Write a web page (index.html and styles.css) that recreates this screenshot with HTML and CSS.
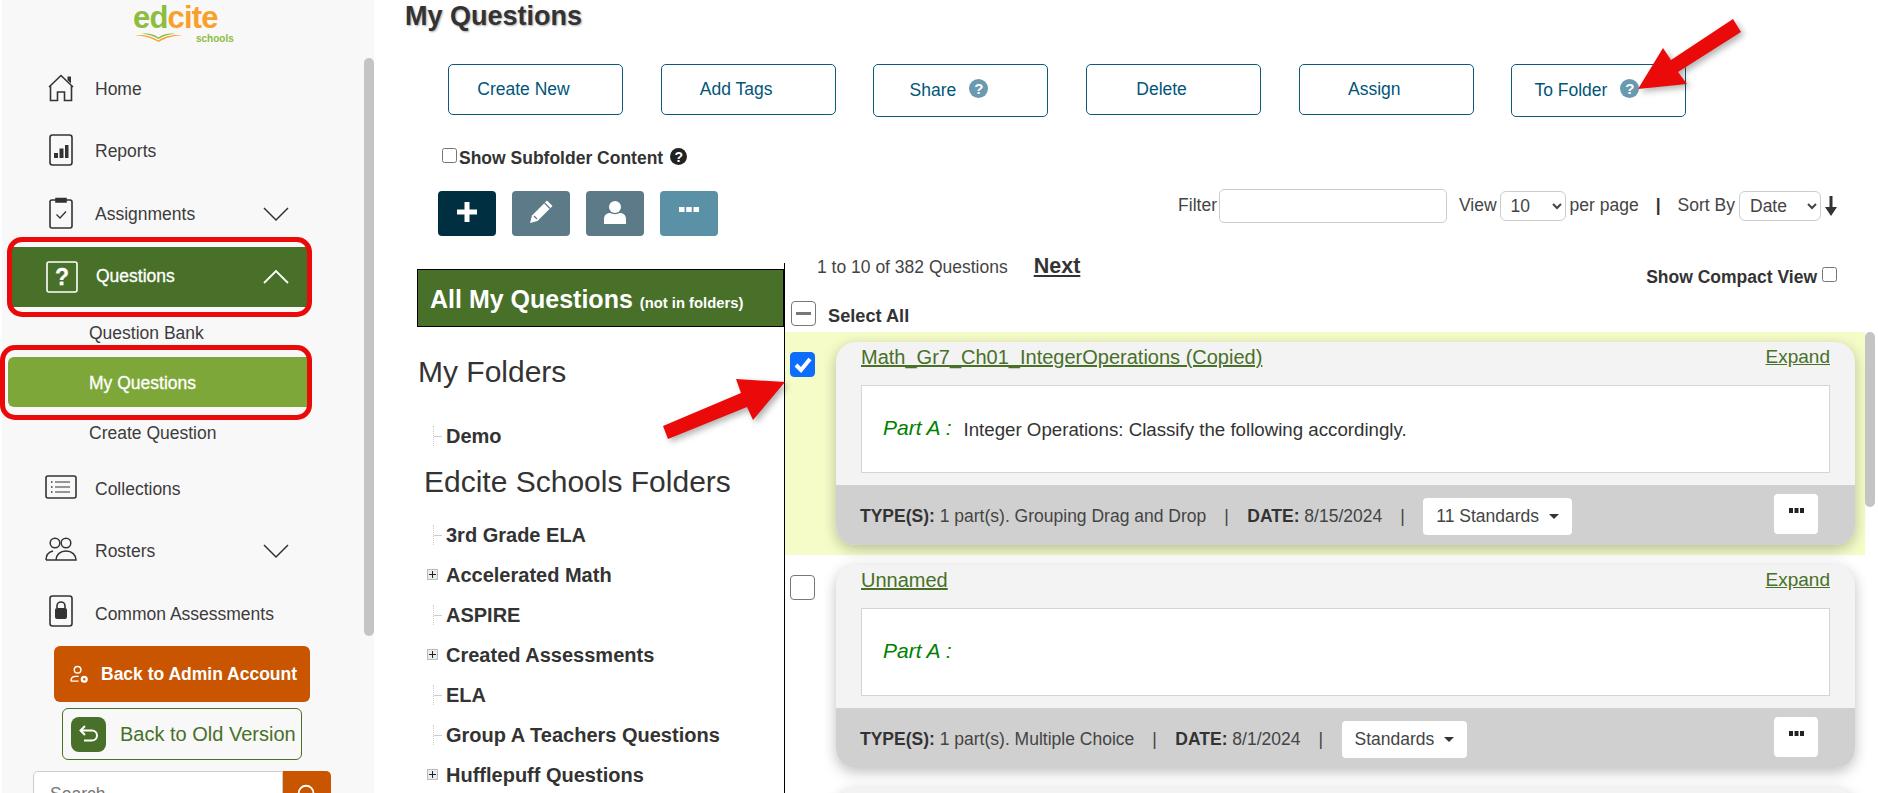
FILE: index.html
```html
<!DOCTYPE html>
<html lang="en">
<head>
<meta charset="utf-8">
<title>My Questions</title>
<link rel="stylesheet" href="styles.css">
</head>
<body>
<aside class="side">
  <div class="logo">
    <div class="logo-word"><span class="l-g">ed</span><span class="l-o">cite</span></div>
    <div class="logo-sub">
      <svg class="logo-book" viewBox="0 0 60 12" width="49" height="9" preserveAspectRatio="none"><path d="M1 3c10-1 20 1 29 7 8-6 19-8 29-7-11 1-20 3-29 9C21 6 12 4 1 3z" fill="#f9a02c"/><path d="M10 1c8-1 15 1 20 5 5-4 12-6 20-5-8 1-14 3-20 7C24 4 18 2 10 1z" fill="#8cbd3f"/></svg>
      <span class="logo-schools">schools</span>
    </div>
  </div>
  <nav class="nav">
    <a class="nav-row"><span class="nav-ico"><svg viewBox="0 0 26 28" width="26" height="28" fill="none" stroke="#333" stroke-width="1.6"><path d="M1 13 13 1.500 25 13M2.500 12v14.500h7V18h7v8.500h7V12"/><path d="M19.500 6V2.500h3.500v7z" fill="#333" stroke="none"/></svg></span><span class="nav-text">Home</span></a>
    <a class="nav-row"><span class="nav-ico"><svg viewBox="0 0 24 32" width="24" height="32"><rect x="1" y="1" width="22" height="30" rx="2.500" fill="none" stroke="#333" stroke-width="1.600"/><path d="M5 19h4v5H5zM10.500 14.500h4V24h-4zM16 11h3.500v13H16z" fill="#333"/></svg></span><span class="nav-text">Reports</span></a>
    <a class="nav-row nav-gap1"><span class="nav-ico"><svg viewBox="0 0 24 32" width="24" height="32" fill="none" stroke="#333" stroke-width="1.600"><path d="M7 3H3a2 2 0 0 0-2 2v24a2 2 0 0 0 2 2h18a2 2 0 0 0 2-2V5a2 2 0 0 0-2-2h-4"/><path d="M7 1.500h10v3.500H7z" fill="#333"/><path d="m7.500 17.500 3.500 3.500 6-6.500" stroke-width="1.300"/></svg></span><span class="nav-text nav-label">Assignments</span><svg class="chev" viewBox="0 0 26 15" width="26" height="15" fill="none" stroke="#333" stroke-width="1.500"><path d="m1 1 12 12L25 1"/></svg></a>
    <a class="nav-row nav-active"><span class="nav-ico"><svg viewBox="0 0 32 32" width="32" height="32"><rect x="1" y="1" width="30" height="30" rx="2" fill="none" stroke="#fff" stroke-width="1.600"/></svg><span class="q-mark">?</span></span><span class="nav-label">Questions</span><svg class="chev" viewBox="0 0 26 15" width="26" height="15" fill="none" stroke="#fff" stroke-width="1.800"><path d="m1 14 12-12 12 12"/></svg></a>
    <a class="sub-row">Question Bank</a>
    <a class="sub-row sub-active">My Questions</a>
    <a class="sub-row">Create Question</a>
    <a class="nav-row nav-gap2 nav-low"><span class="nav-ico"><svg viewBox="0 0 32 24" width="32" height="24" fill="none" stroke="#333" stroke-width="1.600"><rect x="1" y="1" width="30" height="22" rx="2"/><path d="M10 7h15M10 12h15M10 17h15" stroke-width="1.200"/><path d="M6 7h1.500M6 12h1.500M6 17h1.500" stroke-width="1.400"/></svg></span><span class="nav-text">Collections</span></a>
    <a class="nav-row nav-low"><span class="nav-ico"><svg viewBox="0 0 32 24" width="32" height="24" fill="none" stroke="#333" stroke-width="1.500"><circle cx="10" cy="6" r="4.800"/><circle cx="21" cy="6" r="4.800"/><path d="M1 23c0-5 3-8 7-9M1 23h10M11 23c0-5 4-9 10-9s10 4 10 9z"/></svg></span><span class="nav-text nav-label">Rosters</span><svg class="chev" viewBox="0 0 26 15" width="26" height="15" fill="none" stroke="#333" stroke-width="1.500"><path d="m1 1 12 12L25 1"/></svg></a>
    <a class="nav-row nav-lower"><span class="nav-ico"><svg viewBox="0 0 24 32" width="24" height="32"><rect x="1" y="1" width="22" height="30" rx="2.500" fill="none" stroke="#333" stroke-width="1.600"/><path d="M8 13v-2a4 4 0 0 1 8 0v2" fill="none" stroke="#333" stroke-width="1.600"/><rect x="6" y="13" width="12" height="11" rx="2" fill="#333"/></svg></span><span class="nav-text">Common Assessments</span></a>
  </nav>
  <a class="admin-btn"><svg viewBox="0 0 20 20" width="19" height="19" fill="none" stroke="#fff" stroke-width="1.500"><circle cx="8" cy="5" r="3.500"/><path d="M1 17c0-3 2-5 5-5h3M1 17h8"/><circle cx="15" cy="15" r="2.500" stroke-width="2.500"/></svg><span>Back to Admin Account</span></a>
  <a class="old-btn"><span class="old-ico"><svg viewBox="0 0 24 24" width="24" height="24" fill="none" stroke="#fff" stroke-width="2"><path d="M8 4 3.500 8.500 8 13M4 8.500h11a5 5 0 0 1 0 10H7"/></svg></span><span>Back to Old Version</span></a>
  <div class="search">
    <input class="search-input" placeholder="Search">
    <button class="search-btn"><svg viewBox="0 0 24 24" width="22" height="22" fill="none" stroke="#fff" stroke-width="2"><circle cx="11" cy="11" r="8"/><path d="m17 17 5 5"/></svg></button>
  </div>
  <div class="side-thumb"></div>
</aside>

<main class="main">
  <h1 class="title">My Questions</h1>
  <div class="actions">
    <a class="act">Create New</a>
    <a class="act">Add Tags</a>
    <a class="act act-tall"><span>Share</span><span class="help help-blue">?</span></a>
    <a class="act">Delete</a>
    <a class="act">Assign</a>
    <a class="act act-tall"><span>To Folder</span><span class="help help-blue">?</span></a>
  </div>
  <label class="subfolder"><input type="checkbox" class="cb-small"><span class="sub-label">Show Subfolder Content</span><span class="help help-dark">?</span></label>
  <div class="tools">
    <div class="icon-btns">
      <button class="ibtn ib-navy"><svg viewBox="0 0 20 20" width="20" height="20"><path d="M7.500 0h5v7.500H20v5h-7.500V20h-5v-7.500H0v-5h7.500z" fill="#fff"/></svg></button>
      <button class="ibtn ib-slate"><svg viewBox="0 0 26 26" width="26" height="26"><path d="M19 1.500 24.500 7 9.500 22 2 24l2-7.500z" fill="#fff"/><path d="m16.500 4 5.500 5.500M6 17l3 3" stroke="#5c7a87" stroke-width="1.200"/></svg></button>
      <button class="ibtn ib-slate"><svg viewBox="0 0 22 24" width="22" height="24"><circle cx="11" cy="7" r="6" fill="#fff"/><path d="M0 24v-5c0-4 3-6 6-6 3 1.500 7 1.500 10 0 3 0 6 2 6 6v5z" fill="#fff"/></svg></button>
      <button class="ibtn ib-teal"><svg viewBox="0 0 20 5" width="20" height="5"><path d="M0 0h5.500v5H0zM7.200 0h5.500v5H7.200zM14.500 0H20v5h-5.500z" fill="#fff"/></svg></button>
    </div>
    <div class="filters">
      <span>Filter</span><input class="filter-input">
      <span class="f-view">View</span>
      <select class="sel sel-view"><option>10</option></select>
      <span>per page</span>
      <span class="f-pipe">|</span>
      <span>Sort By</span>
      <select class="sel sel-sort"><option>Date</option></select>
      <svg class="sort-arrow" viewBox="0 0 12 20" width="12" height="20"><path d="M4.500 0h3v11H12l-6 9-6-9h4.500z" fill="#333"/></svg>
    </div>
  </div>
  <div class="content">
    <section class="folders">
      <div class="banner"><strong>All My Questions</strong> <small>(not in folders)</small></div>
      <h2 class="fh fh-my">My Folders</h2>
      <div class="tree-row tr-demo"><i class="dots"></i><span>Demo</span></div>
      <h2 class="fh fh-ed">Edcite Schools Folders</h2>
      <div class="tree-list">
        <div class="tree-row"><i class="dots"></i><span>3rd Grade ELA</span></div>
        <div class="tree-row"><i class="plus"></i><span>Accelerated Math</span></div>
        <div class="tree-row"><i class="dots"></i><span>ASPIRE</span></div>
        <div class="tree-row"><i class="plus"></i><span>Created Assessments</span></div>
        <div class="tree-row"><i class="dots"></i><span>ELA</span></div>
        <div class="tree-row"><i class="dots"></i><span>Group A Teachers Questions</span></div>
        <div class="tree-row"><i class="plus"></i><span>Hufflepuff Questions</span></div>
      </div>
    </section>
    <section class="list">
      <div class="list-head">
        <span class="count">1 to 10 of 382 Questions</span>
        <a class="next">Next</a>
        <label class="compact"><span>Show Compact View</span><input type="checkbox" class="cb-small"></label>
      </div>
      <div class="select-all"><span class="minus"></span><b>Select All</b></div>
      <div class="rows">
        <article class="row row-on">
          <span class="cb cb-on"><svg viewBox="0 0 24 24" width="24" height="24" fill="none" stroke="#fff" stroke-width="4"><path d="m5 12 5 5 9-11"/></svg></span>
          <div class="card">
            <div class="card-head"><a class="link">Math_Gr7_Ch01_IntegerOperations (Copied)</a><a class="link link-x">Expand</a></div>
            <div class="card-box"><em>Part A :</em><span class="q-text">Integer Operations: Classify the following accordingly.</span></div>
            <div class="card-foot"><span><b>TYPE(S):</b> 1 part(s). Grouping Drag and Drop</span><span class="pipe">|</span><span><b>DATE:</b> 8/15/2024</span><span class="pipe">|</span><button class="std">11 Standards<i class="caret"></i></button><button class="more"><svg viewBox="0 0 15 5" width="15" height="5"><path d="M0 0h4v5H0zM5.500 0h4v5h-4zM11 0h4v5h-4z" fill="#222"/></svg></button></div>
          </div>
        </article>
        <article class="row">
          <span class="cb"></span>
          <div class="card">
            <div class="card-head"><a class="link">Unnamed</a><a class="link link-x">Expand</a></div>
            <div class="card-box"><em>Part A :</em></div>
            <div class="card-foot"><span><b>TYPE(S):</b> 1 part(s). Multiple Choice</span><span class="pipe">|</span><span><b>DATE:</b> 8/1/2024</span><span class="pipe">|</span><button class="std">Standards<i class="caret"></i></button><button class="more"><svg viewBox="0 0 15 5" width="15" height="5"><path d="M0 0h4v5H0zM5.500 0h4v5h-4zM11 0h4v5h-4z" fill="#222"/></svg></button></div>
          </div>
        </article>
        <article class="row"><div class="card card-next"></div></article>
      </div>
    </section>
  </div>
  <div class="list-thumb"></div>
</main>

<div class="ring ring-q"></div>
<div class="ring ring-m"></div>
<svg class="arrow" viewBox="0 0 1878 793" width="1878" height="793"><polygon points="1638,89 1663,48 1671,60 1733,19 1741,32 1678,72 1687,84" fill="#ea0a0a"/><polygon points="663,426 668,439 747,407 753,420 785,382 736,379 741,393" fill="#ea0a0a"/></svg>
</body>
</html>
```
FILE: styles.css
```css
* { box-sizing: border-box; }
html, body { height: 793px; overflow: hidden; }
body { margin: 0; position: relative; display: flex; background: #fff; color: #333; font-family: "Liberation Sans", Arial, sans-serif; font-size: 17.5px; }
a { color: inherit; text-decoration: none; }
button { font-family: inherit; }

/* sidebar */
.side { position: relative; flex: none; width: 372px; height: 793px; margin-left: 2px; background: #f8f8f8; overflow: hidden; }
.logo { height: 57px; padding: 1px 0 0 131px; }
.logo-word { font-weight: 700; font-size: 31px; line-height: 34px; letter-spacing: -.8px; height: 29px; }
.l-g { color: #8cbd3f; }
.l-o { color: #f9a02c; }
.logo-sub { display: flex; align-items: flex-start; margin-top: 3px; }
.logo-book { flex: none; width: 49px; height: 9px; margin-left: 1px; }
.logo-schools { font-size: 10px; font-weight: 700; color: #8cbd3f; margin: 0 0 0 13px; line-height: 12px; }
.nav { display: flex; flex-direction: column; }
.nav-row { height: 62px; display: flex; align-items: center; padding-left: 10px; color: #3c3c3c; position: relative; }
.nav-ico { flex: none; width: 83px; padding-left: 32px; position: relative; display: flex; align-items: center; justify-content: flex-start; }
.nav-ico svg { display: block; }
.nav-row .nav-ico svg[width="24"] { margin-left: 5px; }
.nav-row .nav-ico svg[width="26"] { margin-left: 4px; }
.nav-row .nav-ico svg[width="32"] { margin-left: 1px; }
.nav-gap1 { height: 63px; }
.nav-gap2 { margin-top: -1px; }
.nav-text { padding-top: 3px; }
.nav-low .nav-text { padding-top: 5px; }
.nav-lower .nav-text { padding-top: 7px; }
.nav-label { flex: 1; }
.chev { flex: none; margin: 3px 85px 0 0; }
.nav-low .chev { margin-top: 5px; }
.nav-active { height: 60px; width: 295px; margin: 3px 0 0 10px; padding-left: 1px; background: #487028; color: #fff; -webkit-text-stroke: .3px #fff; }
.nav-active .nav-label { padding-bottom: 2px; }
.q-mark { position: absolute; left: 33px; width: 32px; text-align: center; font-weight: 700; font-size: 23px; color: #fff; }
.nav-active .chev { margin: 0 18px 2px 0; }
.sub-row { height: 50px; display: flex; align-items: center; padding: 2px 0 0 87px; color: #3c3c3c; }
.sub-active { margin-left: 6px; padding-left: 81px; width: 299px; background: #7ea73a; color: #fff; border-radius: 6px 0 0 6px; -webkit-text-stroke: .3px #fff; }
.admin-btn { display: flex; align-items: center; gap: 12px; height: 56px; width: 256px; margin: 4px 0 0 52px; padding-left: 16px; background: #c95500; color: #fff; font-weight: 700; border-radius: 6px; font-size: 17.500px; white-space: nowrap; }
.old-btn { display: flex; align-items: center; gap: 14px; height: 52px; width: 240px; margin: 6px 0 0 60px; padding-left: 8px; border: 1px solid #487028; border-radius: 6px; color: #487028; font-size: 20px; white-space: nowrap; }
.old-ico { flex: none; width: 35px; height: 35px; background: #487028; border-radius: 8px; display: flex; align-items: center; justify-content: center; }
.search { display: flex; margin: 11px 0 0 31px; }
.search-input { width: 250px; height: 46px; border: 1px solid #ccc; border-radius: 5px 0 0 5px; padding: 0 16px; font: 17.500px "Liberation Sans", sans-serif; background: #fff; }
.search-input::placeholder { color: #777; }
.search-btn { width: 48px; height: 46px; border: 0; border-radius: 0 5px 5px 0; background: #c95500; padding: 0; display: flex; align-items: center; justify-content: center; }
.side-thumb { position: absolute; left: 362px; top: 58px; width: 10px; height: 578px; border-radius: 5px; background: #c4c4c4; }

/* main */
.main { flex: 1; min-width: 0; height: 793px; position: relative; }
.title { margin: 0 0 0 31px; height: 30px; padding-top: 1px; font-size: 27px; line-height: 30px; font-weight: 700; color: #333; text-shadow: 1px 1px 2px #aaa; }
.actions { display: flex; align-items: flex-start; gap: 37.700px; margin: 34px 0 0 74px; }
.act { width: 175px; height: 51px; flex: none; border: 1px solid #0a5a78; border-radius: 5px; display: flex; align-items: center; justify-content: center; padding: 0 24px 1px 0; color: #00567a; font-size: 17.500px; }
.act-tall { height: 53px; gap: 13px; padding: 0 24px 1px 0; }
.help { display: inline-flex; align-items: center; justify-content: center; width: 19px; height: 19px; border-radius: 50%; color: #fff; font-size: 15px; font-weight: 700; flex: none; margin-top: -3px; }
.help-blue { background: #6a9ab0; }
.help-dark { width: 17px; height: 17px; background: #222; margin-left: 7px; margin-top: 0; font-size: 14px; }
.subfolder { display: flex; align-items: center; height: 17px; margin: 31px 0 0 68px; font-weight: 700; font-size: 17.500px; color: #333; }
.sub-label { padding-top: 4px; }
.cb-small { width: 15px; height: 15px; margin: 0; flex: none; }
.subfolder .cb-small { margin-right: 2px; margin-top: -3px; }
.tools { display: flex; justify-content: space-between; align-items: flex-start; margin: 26px 41px 0 64px; height: 45px; }
.icon-btns { display: flex; gap: 16px; }
.ibtn { width: 58px; height: 45px; border: 0; border-radius: 4px; padding: 0 0 4px; display: flex; align-items: center; justify-content: center; }
.ib-navy { background: #012f42; }
.ib-slate { background: #5c7a87; }
.ib-teal { background: #5b91a6; padding-bottom: 8px; }
.filters { display: flex; align-items: center; height: 34px; margin-top: -2px; font-size: 17.500px; color: #444; }
.filters > span { margin-top: -2px; }
.filter-input { width: 228px; height: 34px; margin: 0 12px 0 2px; border: 1px solid #ccc; border-radius: 5px; background: #fff; }
.sel { height: 30px; margin: 0 4px 0 3px; border: 1px solid #ccc; border-radius: 6px; background: #fff; font: 17.500px "Liberation Sans", sans-serif; color: #444; padding: 0 0 0 6px; }
.sel-view { width: 66px; }
.sel-sort { width: 82px; margin: 0 3px 0 4px; }
.f-pipe { margin: 0 17px; color: #333; font-weight: 700; }
.sort-arrow { margin-left: 1px; }
.content { display: flex; margin-top: 27px; height: 530px; }
.folders { flex: none; width: 410px; padding: 6px 0 0 43px; }
.banner { width: 367px; height: 58px; border: 1px solid #000; background: #487028; color: #fff; padding: 2px 0 0 12px; display: flex; align-items: center; gap: 7px; white-space: nowrap; }
.banner strong { font-size: 25px; }
.banner small { font-size: 14.800px; font-weight: 700; margin-top: 7px; }
.fh { margin: 0; font-weight: 400; font-size: 30px; height: 40px; line-height: 42px; color: #333; white-space: nowrap; }
.fh-my { margin: 24px 0 0 1px; }
.fh-ed { margin: 5px 0 0 7px; }
.tr-demo { margin-top: 25px; }
.tree-list { margin-top: 14px; }
.tree-row { position: relative; height: 40px; display: flex; align-items: center; padding-left: 29px; font-weight: 700; font-size: 20px; color: #333; white-space: nowrap; }
.dots { position: absolute; left: 16px; top: 10px; height: 20px; width: 9px; border-left: 1px dotted #ccc; background: linear-gradient(#ccc, #ccc) 0 10px / 9px 1px no-repeat; }
.plus { position: absolute; left: 10px; top: 14px; width: 11px; height: 11px; border: 1px solid #bbb; background: linear-gradient(#222, #222) center / 7px 1px no-repeat, linear-gradient(#222, #222) center / 1px 7px no-repeat, #e8edf2; }
.list { flex: 1; min-width: 0; border-left: 1px solid #000; }
.list-head { position: relative; display: flex; align-items: flex-start; height: 35px; margin-top: -8px; padding-left: 32px; }
.count { font-size: 17.500px; line-height: 24px; color: #444; }
.next { margin-left: 26px; font-size: 21.500px; line-height: 22px; font-weight: 700; text-decoration: underline; color: #333; }
.compact { display: flex; align-items: center; gap: 5px; margin-left: auto; margin-right: 41px; margin-top: 12px; height: 20px; font-size: 17.500px; font-weight: 700; color: #333; }
.compact .cb-small { margin-top: -5px; }
.select-all { display: flex; align-items: center; gap: 12px; height: 25px; margin-top: 11px; padding-left: 6px; font-size: 18.200px; color: #333; }
.select-all b { padding-top: 5px; }
.minus { width: 25px; height: 25px; border: 1px solid #777; border-radius: 4px; background: linear-gradient(#777, #777) center / 15px 3px no-repeat, #fff; }
.rows { margin: 6px 13px 0 0; }
.row { display: flex; align-items: flex-start; gap: 21px; height: 223px; padding: 10px 10px 0 5px; }
.row-on { background: #f5fcc8; }
.cb { flex: none; width: 25px; height: 25px; margin-top: 10px; border: 1px solid #777; border-radius: 4px; background: #fff; }
.cb-on { background: #0d6efd; border-color: #0d6efd; }
.cb-on svg { display: block; }
.card { flex: 1; height: 203px; border-radius: 20px; background: #f3f3f3; box-shadow: 0 4px 14px rgba(0, 0, 0, .25); overflow: hidden; display: flex; flex-direction: column; }
.card-next { margin-left: 46px; }
.card-head { flex: none; display: flex; justify-content: space-between; height: 43px; padding: 0 25px; line-height: 30px; font-size: 20px; }
.link { color: #487028; text-decoration: underline; }
.link-x { font-size: 19px; }
.card-box { flex: none; height: 88px; margin: 0 25px; border: 1px solid #d5d5d5; background: #fff; display: flex; align-items: center; padding: 0 0 0 21px; gap: 12px; font-size: 18.700px; }
.card-box em { color: #008000; font-size: 21px; margin-top: -3px; }
.q-text { padding-top: 2px; }
.card-foot { margin-top: 12px; flex: none; height: 60px; background: #d0d0d0; display: flex; align-items: flex-start; padding: 13px 37px 0 24px; font-size: 17.500px; line-height: 37px; color: #444; white-space: nowrap; }
.card-foot b { color: #333; }
.pipe { margin: 0 18.500px 0 18px; }
.std { height: 37px; border: 0; border-radius: 4px; background: #fff; padding: 0 13px; font-size: 17.500px; color: #444; display: flex; align-items: center; gap: 10px; }
.caret { width: 0; height: 0; border: 5.500px solid transparent; border-top-color: #333; border-bottom-width: 0; }
.more { margin: -4px 0 0 auto; width: 44px; height: 40px; border: 0; border-radius: 4px; background: #fff; padding: 0 0 7px; display: flex; align-items: center; justify-content: center; }
.list-thumb { position: absolute; right: 3px; top: 332px; width: 10px; height: 175px; border-radius: 5px; background: #c4c4c4; }

/* annotations laid over the capture */
.ring { position: absolute; border: 5px solid #ea0a0a; border-radius: 15px; pointer-events: none; }
.ring-q { left: 7px; top: 237px; width: 305px; height: 80px; }
.ring-m { left: 0; top: 345px; width: 312px; height: 75px; }
.arrow { position: absolute; left: 0; top: 0; pointer-events: none; filter: drop-shadow(3px 3px 3px rgba(0, 0, 0, .3)); }
```
